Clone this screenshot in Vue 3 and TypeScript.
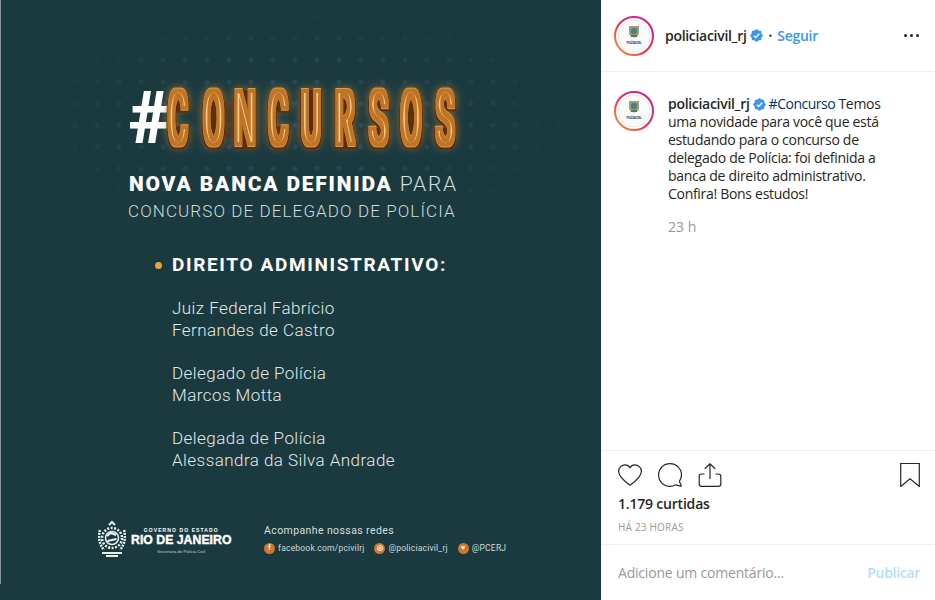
<template>
  <div class="page">
    <section class="poster">
      <div class="dots"></div>

      <svg class="headline" width="350" height="90" viewBox="0 0 350 90">
        <defs>
          <filter id="neon" filterUnits="userSpaceOnUse" x="-20" y="-20" width="390" height="130" color-interpolation-filters="sRGB">
            <feMorphology in="SourceAlpha" operator="dilate" radius="3.800 3" result="outer" />
            <feGaussianBlur in="outer" stdDeviation="4" result="blurred" />
            <feFlood flood-color="#e08a2c" flood-opacity="0.6" />
            <feComposite in2="blurred" operator="in" result="glow" />
            <feMorphology in="SourceAlpha" operator="dilate" radius="8 3" result="wide" />
            <feMorphology in="wide" operator="erode" radius="4.200 0" result="plate" />
            <feOffset in="plate" dy="1.500" result="plateLow" />
            <feFlood flood-color="#5b2e10" />
            <feComposite in2="plateLow" operator="in" result="shadow" />
            <feMorphology in="SourceAlpha" operator="dilate" radius="3.400 2.600" result="rim" />
            <feFlood flood-color="#e09c40" />
            <feComposite in2="rim" operator="in" result="rimFill" />
            <feMorphology in="SourceAlpha" operator="dilate" radius="2.600 1.800" result="face" />
            <feFlood flood-color="#bf7426" />
            <feComposite in2="face" operator="in" result="faceFill" />
            <feMorphology in="SourceAlpha" operator="erode" radius="0 1.500" result="inline" />
            <feFlood flood-color="#f7c985" />
            <feComposite in2="inline" operator="in" result="inlineFill" />
            <feMerge>
              <feMergeNode in="glow" />
              <feMergeNode in="shadow" />
              <feMergeNode in="rimFill" />
              <feMergeNode in="faceFill" />
              <feMergeNode in="inlineFill" />
            </feMerge>
          </filter>
        </defs>
        <text class="hash" x="-1" y="75">#</text>
        <g filter="url(#neon)">
          <text class="neon" :x="letterX" y="76" :transform="`scale(${LETTER_SCALE} 1)`">CONCURSOS</text>
        </g>
      </svg>

      <h1 class="title"><b>NOVA BANCA DEFINIDA</b> PARA</h1>
      <p class="subtitle">CONCURSO DE DELEGADO DE POLÍCIA</p>

      <h2 class="topic"><i class="bullet"></i>DIREITO ADMINISTRATIVO:</h2>
      <div class="names">
        <p v-for="name in names" :key="name[0]">{{ name[0] }}<br />{{ name[1] }}</p>
      </div>

      <footer class="poster-foot">
        <div class="gov">
          <svg class="seal" width="28" height="38" viewBox="0 0 28 38" fill="none" stroke="#e8eeee">
            <circle cx="14" cy="18" r="10" stroke-width="2.500" stroke-dasharray="2 1.500" />
            <circle cx="14" cy="18" r="6.500" stroke-width="1.500" />
            <path d="M9 16l4-3 5 2M9.500 21l9-2" stroke-width="2" />
            <path d="M11 5l3-3 3 3M4 33h20M8 36h12" stroke-width="2" />
            <path d="M2 10c-2 6-1 14 4 20M26 10c2 6 1 14-4 20" stroke-width="2.500" stroke-dasharray="2 1" />
          </svg>
          <div class="gov-text">
            <span class="gov-top">GOVERNO DO ESTADO</span>
            <span class="gov-name">RIO DE JANEIRO</span>
            <span class="gov-sub">Secretaria de Polícia Civil</span>
          </div>
        </div>
        <div class="social">
          <span class="social-title">Acompanhe nossas redes</span>
          <div class="social-row">
            <span v-for="s in socials" :key="s.label" class="social-item">
              <i class="social-dot">{{ s.glyph }}</i>{{ s.label }}
            </span>
          </div>
        </div>
      </footer>
    </section>

    <aside class="side">
      <header class="side-head">
        <svg class="avatar" width="40" height="40" viewBox="0 0 40 40" v-html="avatarSvg('ringA')"></svg>
        <a class="user head-user">policiacivil_rj</a>
        <svg class="badge" width="13" height="13" viewBox="0 0 40 40">
          <path :d="badgePath" fill="#3897f0" />
          <path d="M12 20.500l5.500 5.500L28.500 14.500" fill="none" stroke="#fff" stroke-width="4.500" />
        </svg>
        <span class="sep">•</span>
        <a class="follow">Seguir</a>
        <span class="more"><i></i><i></i><i></i></span>
      </header>

      <div class="caption">
        <svg class="avatar" width="40" height="40" viewBox="0 0 40 40" v-html="avatarSvg('ringB')"></svg>
        <div class="caption-body">
          <p class="caption-text">
            <a class="user">policiacivil_rj</a>
            <svg class="badge inline" width="13" height="13" viewBox="0 0 40 40">
              <path :d="badgePath" fill="#3897f0" />
              <path d="M12 20.500l5.500 5.500L28.500 14.500" fill="none" stroke="#fff" stroke-width="4.500" />
            </svg>
            <a class="tag">#Concurso</a> Temos uma novidade para você que está estudando para o concurso de delegado de Polícia: foi definida a banca de direito administrativo. Confira! Bons estudos!
          </p>
          <time class="age">23 h</time>
        </div>
      </div>

      <section class="actions">
        <div class="icons">
          <svg width="24" height="24" viewBox="0 0 24 24"><path d="M16.800 1.800c-2.100 0-3.800 1.100-4.800 2.800-1-1.700-2.700-2.800-4.800-2.800C3.700 1.800.6 4.700.6 8.200c0 5 5.800 10 11.400 14 5.600-4 11.400-9 11.400-14 0-3.500-3.100-6.400-6.600-6.400z" /></svg>
          <svg width="24" height="24" viewBox="0 0 24 24"><path d="M21.300 18.300c1.400-1.800 2.200-3.900 2.200-6.300C23.500 5.600 18.400.6 12 .6S.6 5.600.6 12 5.700 23.400 12 23.400c2.100 0 4.100-.6 5.800-1.600l5 1.300c.4.100.6-.2.500-.5z" /></svg>
          <svg width="24" height="24" viewBox="0 0 24 24"><path d="M12 16V.8M6.800 5.800L12 .8l5.200 5M6.500 11H3.500c-1.300 0-2.300 1-2.300 2.300v7.800c0 1.300 1 2.300 2.300 2.300h17c1.300 0 2.300-1 2.300-2.300v-7.800c0-1.300-1-2.300-2.300-2.300h-3" /></svg>
          <svg class="save" width="20" height="24" viewBox="0 0 20 24"><path d="M.7.5h18.600v23L10 15.800.7 23.500z" /></svg>
        </div>
        <div class="likes">1.179 curtidas</div>
        <div class="stamp">HÁ 23 HORAS</div>
      </section>

      <form class="comment" @submit.prevent>
        <span class="placeholder">Adicione um comentário...</span>
        <button class="publish" type="button">Publicar</button>
      </form>
    </aside>
  </div>
</template>

<script setup lang="ts">
const LETTER_SCALE = 0.38

// centres of the nine neon letters, in the svg's own pixels
const letterCentres = [48, 83.500, 115, 148, 181, 215, 248.500, 281, 315]
const letterX = letterCentres.map((c) => (c / LETTER_SCALE).toFixed(1)).join(' ')

const names: [string, string][] = [
  ['Juiz Federal Fabrício', 'Fernandes de Castro'],
  ['Delegado de Polícia', 'Marcos Motta'],
  ['Delegada de Polícia', 'Alessandra da Silva Andrade'],
]

const socials = [
  { glyph: 'f', label: 'facebook.com/pcivilrj' },
  { glyph: '◎', label: '@policiacivil_rj' },
  { glyph: '♥', label: '@PCERJ' },
]

function buildBadge(): string {
  const points: string[] = []
  for (let i = 0; i < 16; i++) {
    const r = i % 2 === 0 ? 20 : 16.500
    const a = (i / 16) * Math.PI * 2
    points.push(`${(20 + r * Math.cos(a)).toFixed(1)} ${(20 + r * Math.sin(a)).toFixed(1)}`)
  }
  return `M${points.join('L')}z`
}

const badgePath = buildBadge()

function avatarSvg(id: string): string {
  return `<defs><linearGradient id="${id}" x1="0" y1="1" x2="1" y2="0">
      <stop offset="0" stop-color="#f9a13b"/><stop offset=".45" stop-color="#e8304f"/><stop offset="1" stop-color="#c41f9c"/>
    </linearGradient></defs>
    <circle cx="20" cy="20" r="19" fill="#fff" stroke="url(#${id})" stroke-width="2"/>
    <circle cx="20" cy="20" r="16" fill="#fafafa" stroke="#e4e4e4" stroke-width=".8"/>
    <path d="M15 10h10v7c0 2.500-2.500 4-5 4.500-2.500-.5-5-2-5-4.500z" fill="#9da06a"/>
    <circle cx="20" cy="15" r="3.200" fill="#4d7f92"/>
    <path d="M17 19h6v2h-6z" fill="#4f7a58"/>
    <text x="20" y="27.500" text-anchor="middle" font-family="Liberation Sans" font-weight="700" font-size="3" textLength="15" fill="#27406b">POLÍCIA CIVIL</text>`
}
</script>

<style scoped>
.page {
  display: flex;
  width: 935px;
  height: 600px;
  overflow: hidden;
  background: #fff;
  font-family: "Open Sans", "Liberation Sans", sans-serif;
}

/* poster */
.poster {
  position: relative;
  width: 601px;
  height: 600px;
  box-sizing: border-box;
  flex: none;
  padding: 68px 0 0 128px;
  background: #1b3a40;
  color: #fff;
  font-family: Roboto, "Liberation Sans", sans-serif;
}

.poster::before {
  content: "";
  position: absolute;
  top: 0;
  left: 0;
  width: 1px;
  height: 584px;
  background: #8c9698;
}

.dots {
  position: absolute;
  top: 6px;
  left: 20px;
  width: 560px;
  height: 230px;
  background-image: radial-gradient(circle, #26495a 0 2px, transparent 3px);
  background-size: 22px 21.700px;
  -webkit-mask-image: radial-gradient(ellipse at 50% 50%, #000 25%, transparent 72%);
  mask-image: radial-gradient(ellipse at 50% 50%, #000 25%, transparent 72%);
}

.headline {
  position: relative;
  display: block;
  overflow: visible;
  margin-left: 2px;
}

.hash {
  fill: #fff;
  font: 900 72px Roboto, sans-serif;
}

.neon {
  font: 300 74px Roboto, sans-serif;
  text-anchor: middle;
  fill: #000;
}

.title {
  position: relative;
  margin: 12px 0 0 1px;
  font-size: 21px;
  line-height: 28px;
  font-weight: 300;
  letter-spacing: 1.800px;
  color: #d5dcdc;
  white-space: nowrap;
}

.title b {
  font-weight: 900;
  color: #fff;
}

.subtitle {
  position: relative;
  margin: 2px 0 0 0;
  font-size: 17px;
  line-height: 22px;
  font-weight: 300;
  letter-spacing: 1.100px;
  color: #d0dada;
  white-space: nowrap;
}

.topic {
  display: flex;
  align-items: center;
  margin: 30px 0 0 27px;
  font-size: 19px;
  line-height: 26px;
  font-weight: 700;
  letter-spacing: 1.650px;
  white-space: nowrap;
}

.bullet {
  width: 7px;
  height: 7px;
  margin-right: 10px;
  border-radius: 50%;
  background: #e8a33c;
}

.names {
  margin: 19px 0 0 44px;
  font-size: 17px;
  line-height: 22px;
  font-weight: 300;
  letter-spacing: 0.450px;
  color: #e3e8e8;
  white-space: nowrap;
}

.names p {
  margin: 0 0 21px;
}

.poster-foot {
  display: flex;
  margin: 49px 0 0 -30px;
}

.gov {
  display: flex;
  gap: 5px;
  width: 166px;
}

.gov-text {
  display: flex;
  flex-direction: column;
  align-items: center;
  padding-top: 7px;
  font-family: "Liberation Sans", sans-serif;
  white-space: nowrap;
}

.gov-top {
  font-size: 5px;
  font-weight: 700;
  letter-spacing: 1.100px;
  line-height: 7px;
}

.gov-name {
  font-size: 12.300px;
  font-weight: 700;
  line-height: 12px;
  -webkit-text-stroke: 0.400px #fff;
}

.gov-sub {
  margin-top: 2px;
  font-size: 4.200px;
  line-height: 7px;
  color: #c9d2d2;
}

.social {
  padding-top: 3px;
}

.social-title {
  display: block;
  font-size: 10.500px;
  line-height: 16px;
  letter-spacing: 0.400px;
  color: #d8dfdf;
}

.social-row {
  display: flex;
  gap: 10px;
  margin-top: 2px;
  font-size: 8.500px;
  line-height: 14px;
  letter-spacing: 0.200px;
  color: #d0d8d8;
  white-space: nowrap;
}

.social-item {
  display: flex;
  align-items: center;
  gap: 3px;
}

.social-dot {
  display: flex;
  align-items: center;
  justify-content: center;
  width: 11px;
  height: 11px;
  border-radius: 50%;
  background: #d0782a;
  font-size: 7px;
  font-style: normal;
  font-weight: 700;
  color: #fff;
}

/* side panel */
.side {
  flex: 1;
  display: flex;
  flex-direction: column;
  min-width: 0;
  color: #262626;
  font-size: 14px;
  line-height: 18px;
}

.side-head {
  display: flex;
  align-items: center;
  height: 71px;
  flex: none;
  padding: 0 16px 0 13px;
  border-bottom: 1px solid #efefef;
}

.avatar {
  flex: none;
}

.user {
  font-weight: 600;
  letter-spacing: -0.300px;
}

.head-user {
  margin-left: 11px;
}

.badge {
  flex: none;
  margin-left: 3px;
}

.badge.inline {
  margin-left: 3px;
  margin-right: 3px;
  vertical-align: -2px;
}

.sep {
  margin: 0 5px 0 6px;
  font-size: 10px;
}

.follow {
  font-weight: 600;
  letter-spacing: -0.300px;
  color: #3897f0;
}

.more {
  display: flex;
  gap: 3px;
  margin-left: auto;
}

.more i {
  width: 3px;
  height: 3px;
  border-radius: 50%;
  background: #262626;
}

.caption {
  flex: 1;
  display: flex;
  gap: 14px;
  padding: 19px 16px 0 13px;
}

.caption-body {
  width: 220px;
  padding-top: 4px;
}

.caption-text {
  margin: 0;
  letter-spacing: -0.300px;
}

.tag {
  letter-spacing: -0.500px;
  color: #003569;
}

.age {
  display: block;
  margin-top: 15px;
  color: #999;
}

.actions {
  flex: none;
  height: 95px;
  box-sizing: border-box;
  padding: 12px 15px 0 17px;
  border-top: 1px solid #efefef;
  border-bottom: 1px solid #efefef;
}

.icons {
  display: flex;
  gap: 16px;
  height: 24px;
}

.icons svg {
  fill: none;
  stroke: #262626;
  stroke-width: 1.200;
}

.icons .save {
  margin-left: auto;
}

.likes {
  margin-top: 8px;
  font-weight: 600;
  letter-spacing: -0.200px;
}

.stamp {
  margin-top: 7px;
  font-size: 10px;
  line-height: 14px;
  letter-spacing: 0.200px;
  color: #999;
}

.comment {
  flex: none;
  display: flex;
  justify-content: space-between;
  align-items: center;
  height: 55px;
  margin: 0;
  padding: 0 15px 0 17px;
}

.placeholder {
  color: #999;
  letter-spacing: -0.200px;
}

.publish {
  padding: 0;
  border: 0;
  background: none;
  font: 600 14px "Open Sans", sans-serif;
  letter-spacing: -0.300px;
  color: #b2dffc;
}
</style>

<style>
body {
  margin: 0;
  overflow: hidden;
  background: #fff;
}
</style>
